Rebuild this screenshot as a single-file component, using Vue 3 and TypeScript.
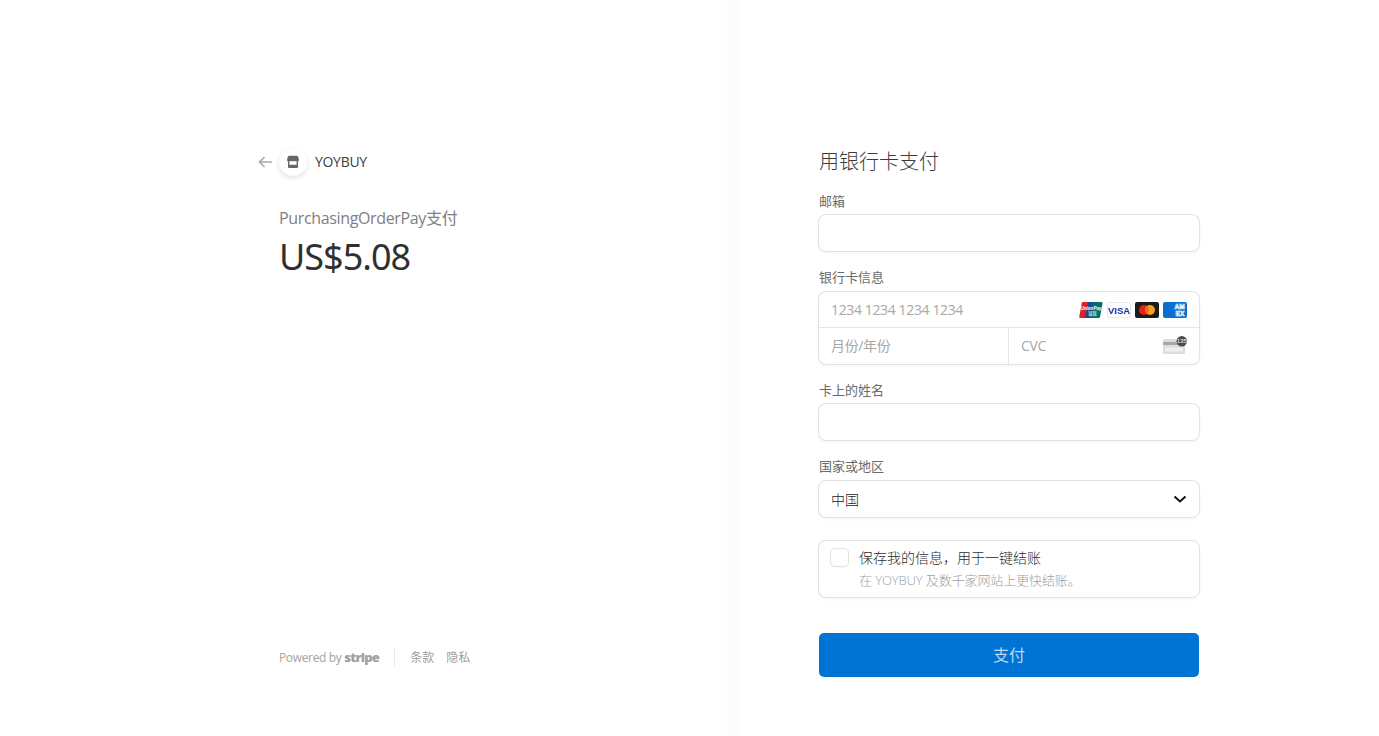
<script setup lang="ts">
const links: string[] = ['条款', '隐私']
</script>

<template>
  <div class="page">
    <section class="summary">
      <div class="merchant">
        <svg class="back" width="14" height="12" viewBox="0 0 14 12" fill="none" stroke="#a9a9a9" stroke-width="1.6"><path d="M14 6H1.5M6.5 1 1.5 6l5 5" /></svg>
        <span class="avatar">
          <svg width="14" height="14" viewBox="0 0 14 14"><path fill="#666" d="M2.6 .8h8.8l1.4 2.6v2a1 1 0 0 1-.8 1V12a1 1 0 0 1-1 1H3a1 1 0 0 1-1-1V6.4a1 1 0 0 1-.8-1v-2z" /><path fill="#fff" d="M3.4 6.2h7.2v3.6H3.4z" /></svg>
        </span>
        <span class="name">YOYBUY</span>
      </div>
      <div class="product">PurchasingOrderPay支付</div>
      <div class="amount">US$5.08</div>
      <div class="grow"></div>
      <footer class="foot">
        <span class="powered">Powered by <b>stripe</b></span>
        <span class="sep"></span>
        <span v-for="l in links" :key="l" class="link">{{ l }}</span>
      </footer>
    </section>

    <section class="pay">
      <h1 class="title">用银行卡支付</h1>
      <label class="lab first">邮箱</label>
      <div class="box input"></div>

      <label class="lab">银行卡信息</label>
      <div class="box card">
        <div class="row top">
          <span class="ph">1234 1234 1234 1234</span>
          <span class="brands">
            <svg width="24" height="16" viewBox="0 0 24 16"><path fill="#d8232a" d="M4 0h7L8 16H1.5a1.2 1.2 0 0 1-1.2-1.5L2.7 1A1.4 1.4 0 0 1 4 0z" /><path fill="#1a4a8c" d="M9 0h7l-3 16H6z" /><path fill="#00716b" d="M14 0h8.3a1.2 1.2 0 0 1 1.2 1.5L21 15a1.4 1.4 0 0 1-1.3 1H11z" /><text x="12" y="7.6" text-anchor="middle" font-size="4.6" font-style="italic" font-weight="700" fill="#fff" font-family="Liberation Sans, sans-serif">UnionPay</text><text x="13.5" y="13.2" text-anchor="middle" font-size="4.4" fill="#fff" font-family="Noto Sans CJK SC, sans-serif">银联</text></svg>
            <svg width="24" height="16" viewBox="0 0 24 16"><rect x=".5" y=".5" width="23" height="15" rx="1.5" fill="#fff" stroke="#e8e8e8" /><text x="12" y="11.6" text-anchor="middle" font-size="9.4" font-weight="700" fill="#1a2fa8" font-family="Liberation Sans, sans-serif">VISA</text></svg>
            <svg width="24" height="16" viewBox="0 0 24 16"><rect width="24" height="16" rx="2" fill="#1b1b1b" /><circle cx="9" cy="8" r="5" fill="#e2231a" /><circle cx="15" cy="8" r="5" fill="#f79e1b" /><path fill="#f26a1b" d="M12 4a5 5 0 0 1 0 8 5 5 0 0 1 0-8z" /></svg>
            <svg width="24" height="16" viewBox="0 0 24 16"><rect width="24" height="16" rx="2" fill="#0a6fd0" /><g font-size="6.6" font-weight="700" fill="#0a6fd0" stroke="#fff" stroke-width=".6" text-anchor="middle" font-family="Liberation Sans, sans-serif"><text x="16.6" y="7.4">AM</text><text x="17" y="13.6">EX</text></g></svg>
          </span>
        </div>
        <div class="row bottom">
          <span class="cell left"><span class="ph">月份/年份</span></span>
          <span class="cell right">
            <span class="ph">CVC</span>
            <span class="cvc">
              <svg width="24" height="18" viewBox="0 0 24 18"><rect y="3" width="22" height="15" rx="1.5" fill="#dcdcdc" /><rect y="6" width="22" height="3" fill="#a8a8a8" /><rect x="2" y="11.5" width="18" height="4" fill="#efefef" /><circle cx="18.8" cy="5.2" r="5.2" fill="#4a4a4a" /><text x="18.8" y="7.3" font-size="5.8" fill="#fff" text-anchor="middle" font-family="Liberation Sans, sans-serif">135</text></svg>
            </span>
          </span>
        </div>
      </div>

      <label class="lab">卡上的姓名</label>
      <div class="box input name-input"></div>

      <label class="lab">国家或地区</label>
      <div class="box input select">
        <span>中国</span>
        <svg width="14" height="9" viewBox="0 0 14 9" fill="none" stroke="#111" stroke-width="2"><path d="m1.5 1.5 5.5 5 5.5-5" /></svg>
      </div>

      <div class="box save">
        <span class="check"></span>
        <div class="save-text">
          <div class="save-main">保存我的信息，用于一键结账</div>
          <div class="save-sub">在 YOYBUY 及数千家网站上更快结账。</div>
        </div>
      </div>

      <button class="btn" type="button">支付</button>
    </section>
  </div>
</template>

<style>
html, body { margin: 0; background: #fff; }
</style>

<style scoped>
.page {
  display: flex;
  height: 736px;
  overflow: hidden;
  background: #fff;
  font-family: "Open Sans", "Noto Sans CJK SC", sans-serif;
  color: #303030;
}
.summary {
  width: 739px;
  flex: none;
  box-sizing: border-box;
  padding: 148px 0 70px 258px;
  display: flex;
  flex-direction: column;
}
.merchant { display: flex; align-items: center; height: 28px; }
.back { margin-right: 7px; }
.avatar {
  width: 28px;
  height: 28px;
  border-radius: 50%;
  background: #fff;
  box-shadow: 0 2px 5px rgba(0, 0, 0, 0.12);
  display: flex;
  align-items: center;
  justify-content: center;
}
.name { margin-left: 8px; font-size: 14px; letter-spacing: -0.3px; color: #3c3c3c; position: relative; top: -1px; }
.product { margin: 31px 0 0 21px; font-size: 16px; line-height: 22px; letter-spacing: -0.35px; color: #808080; }
.amount { margin: 4px 0 0 21px; font-family: "Noto Sans", "Open Sans", sans-serif; font-size: 36px; line-height: 48px; font-weight: 450; color: #303030; letter-spacing: -1px; }
.grow { flex: 1; }
.foot { display: flex; align-items: center; margin-left: 21px; height: 18px; font-size: 12px; color: #a3a3a3; }
.powered { letter-spacing: -0.35px; }
.powered b { font-size: 13px; font-weight: 800; color: #a0a0a0; letter-spacing: -0.75px; }
.sep { width: 1px; height: 18px; background: #e8e8e8; margin: 0 15px; }
.link { margin-right: 12px; color: #a0a0a0; }
.pay {
  box-sizing: border-box;
  flex: 1;
  padding: 148px 0 0 80px;
  display: flex;
  flex-direction: column;
  background: #fff;
  box-shadow: -6px 0 14px 8px rgba(0, 0, 0, 0.015);
  position: relative;
}
.title { margin: 0; font-size: 20px; line-height: 28px; font-weight: 300; color: #3a3a3a; }
.lab { display: block; margin-top: 17px; font-size: 13px; line-height: 18px; color: #6a6a6a; }
.lab.first { margin-top: 16px; }
.box {
  box-sizing: border-box;
  width: 380px;
  margin-top: 6px;
  background: #fff;
  border-radius: 7px;
  box-shadow: 0 0 0 1px #e2e2e2, 0 2px 4px rgba(0, 0, 0, 0.05);
}
.first + .box, .name-input { margin-top: 5px; }
.input { height: 36px; }
.select {
  display: flex;
  align-items: center;
  justify-content: space-between;
  padding: 0 12px;
  font-size: 14px;
  font-weight: 300;
  color: #222;
}
.card { height: 72px; }
.row { height: 36px; display: flex; align-items: center; }
.top { justify-content: space-between; padding: 0 12px; border-bottom: 1px solid #e6e6e6; box-sizing: border-box; }
.bottom { align-items: stretch; }
.ph { font-size: 14px; color: #a8a8a8; letter-spacing: -0.37px; }
.brands { display: flex; gap: 4px; }
.cell { display: flex; align-items: center; box-sizing: border-box; padding: 0 12px 2px; }
.left { width: 190px; border-right: 1px solid #e6e6e6; }
.right { flex: 1; justify-content: space-between; }
.cvc { display: flex; }
.save {
  margin-top: 24px;
  height: 56px;
  display: flex;
  padding: 8px 12px;
}
.check {
  width: 17px;
  height: 17px;
  flex: none;
  border-radius: 4px;
  box-shadow: 0 0 0 1px #e0e0e0, 0 1px 3px rgba(0, 0, 0, 0.06);
}
.save-text { margin-left: 11px; }
.save-main { font-size: 14px; line-height: 18px; font-weight: 300; color: #2a2a2a; }
.save-sub { margin-top: 4px; font-size: 13px; line-height: 18px; font-weight: 300; color: #a0a0a0; letter-spacing: -0.1px; }
.btn {
  margin-top: 36px;
  width: 380px;
  height: 44px;
  border: 0;
  border-radius: 5px;
  padding: 0 0 2px;
  background: #0074d4;
  color: #b8d8f3;
  font: inherit;
  font-size: 16px;
}
</style>
